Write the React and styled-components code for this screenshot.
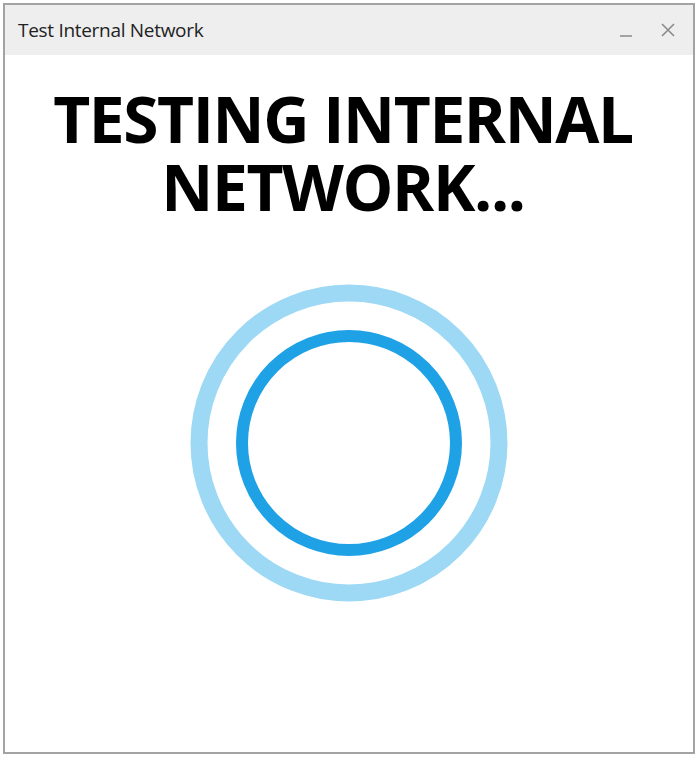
import React from 'react'
import styled, { createGlobalStyle } from 'styled-components'

const baseFont = 'font-family: "Open Sans", "Noto Sans", sans-serif;'

const GlobalStyle = createGlobalStyle`
  html, body {
    margin: 0;
    padding: 0;
    background: #ffffff;
  }
`

const Page = styled.div`
  padding: 3px;
`

const Window = styled.div`
  width: 688px;
  height: 747px;
  border: 2px solid #a3a3a3;
  display: flex;
  flex-direction: column;
  background: #ffffff;
`

const TitleBar = styled.div`
  height: 50px;
  flex-shrink: 0;
  background: #eeeeee;
  display: flex;
  align-items: center;
  justify-content: space-between;
  padding: 0 17px 0 13px;
`

const Title = styled.span`
  ${baseFont}
  font-size: 19px;
  color: #222222;
  letter-spacing: -0.3px;
`

const Controls = styled.div`
  display: flex;
  align-items: center;
  gap: 26px;
`

const ControlButton = styled.button`
  border: none;
  background: none;
  padding: 0;
  width: 16px;
  height: 16px;
  display: flex;
  align-items: center;
  justify-content: center;
  cursor: pointer;
`

const Content = styled.div`
  flex: 1;
  display: flex;
  flex-direction: column;
  align-items: center;
`

const Heading = styled.h1`
  ${baseFont}
  font-weight: 700;
  font-size: 64px;
  line-height: 68px;
  letter-spacing: -1.4px;
  text-align: center;
  color: #000000;
  margin: 30px 0 0;
  padding-right: 12px;
`

const Spinner = styled.div`
  margin-top: 62px;
  width: 320px;
  height: 320px;
`

const App = () => {
  return (
    <Page>
      <GlobalStyle />
      <Window>
        <TitleBar>
          <Title>Test Internal Network</Title>
          <Controls>
            <ControlButton aria-label='minimize'>
              <svg width='16' height='16' viewBox='0 0 16 16'>
                <line x1='2' y1='14' x2='14' y2='14' stroke='#8a8a8a' strokeWidth='1.5' />
              </svg>
            </ControlButton>
            <ControlButton aria-label='close'>
              <svg width='16' height='16' viewBox='0 0 16 16'>
                <path d='M2 2 L14 14 M14 2 L2 14' stroke='#8a8a8a' strokeWidth='1.6' />
              </svg>
            </ControlButton>
          </Controls>
        </TitleBar>
        <Content>
          <Heading>
            TESTING INTERNAL
            <br />
            NETWORK...
          </Heading>
          <Spinner>
            <svg width='320' height='320' viewBox='0 0 320 320'>
              <circle cx='160' cy='160' r='150' fill='none' stroke='#9dd9f4' strokeWidth='17' />
              <circle cx='160' cy='160' r='107' fill='none' stroke='#1fa1e6' strokeWidth='12' />
            </svg>
          </Spinner>
        </Content>
      </Window>
    </Page>
  )
}

export default App
